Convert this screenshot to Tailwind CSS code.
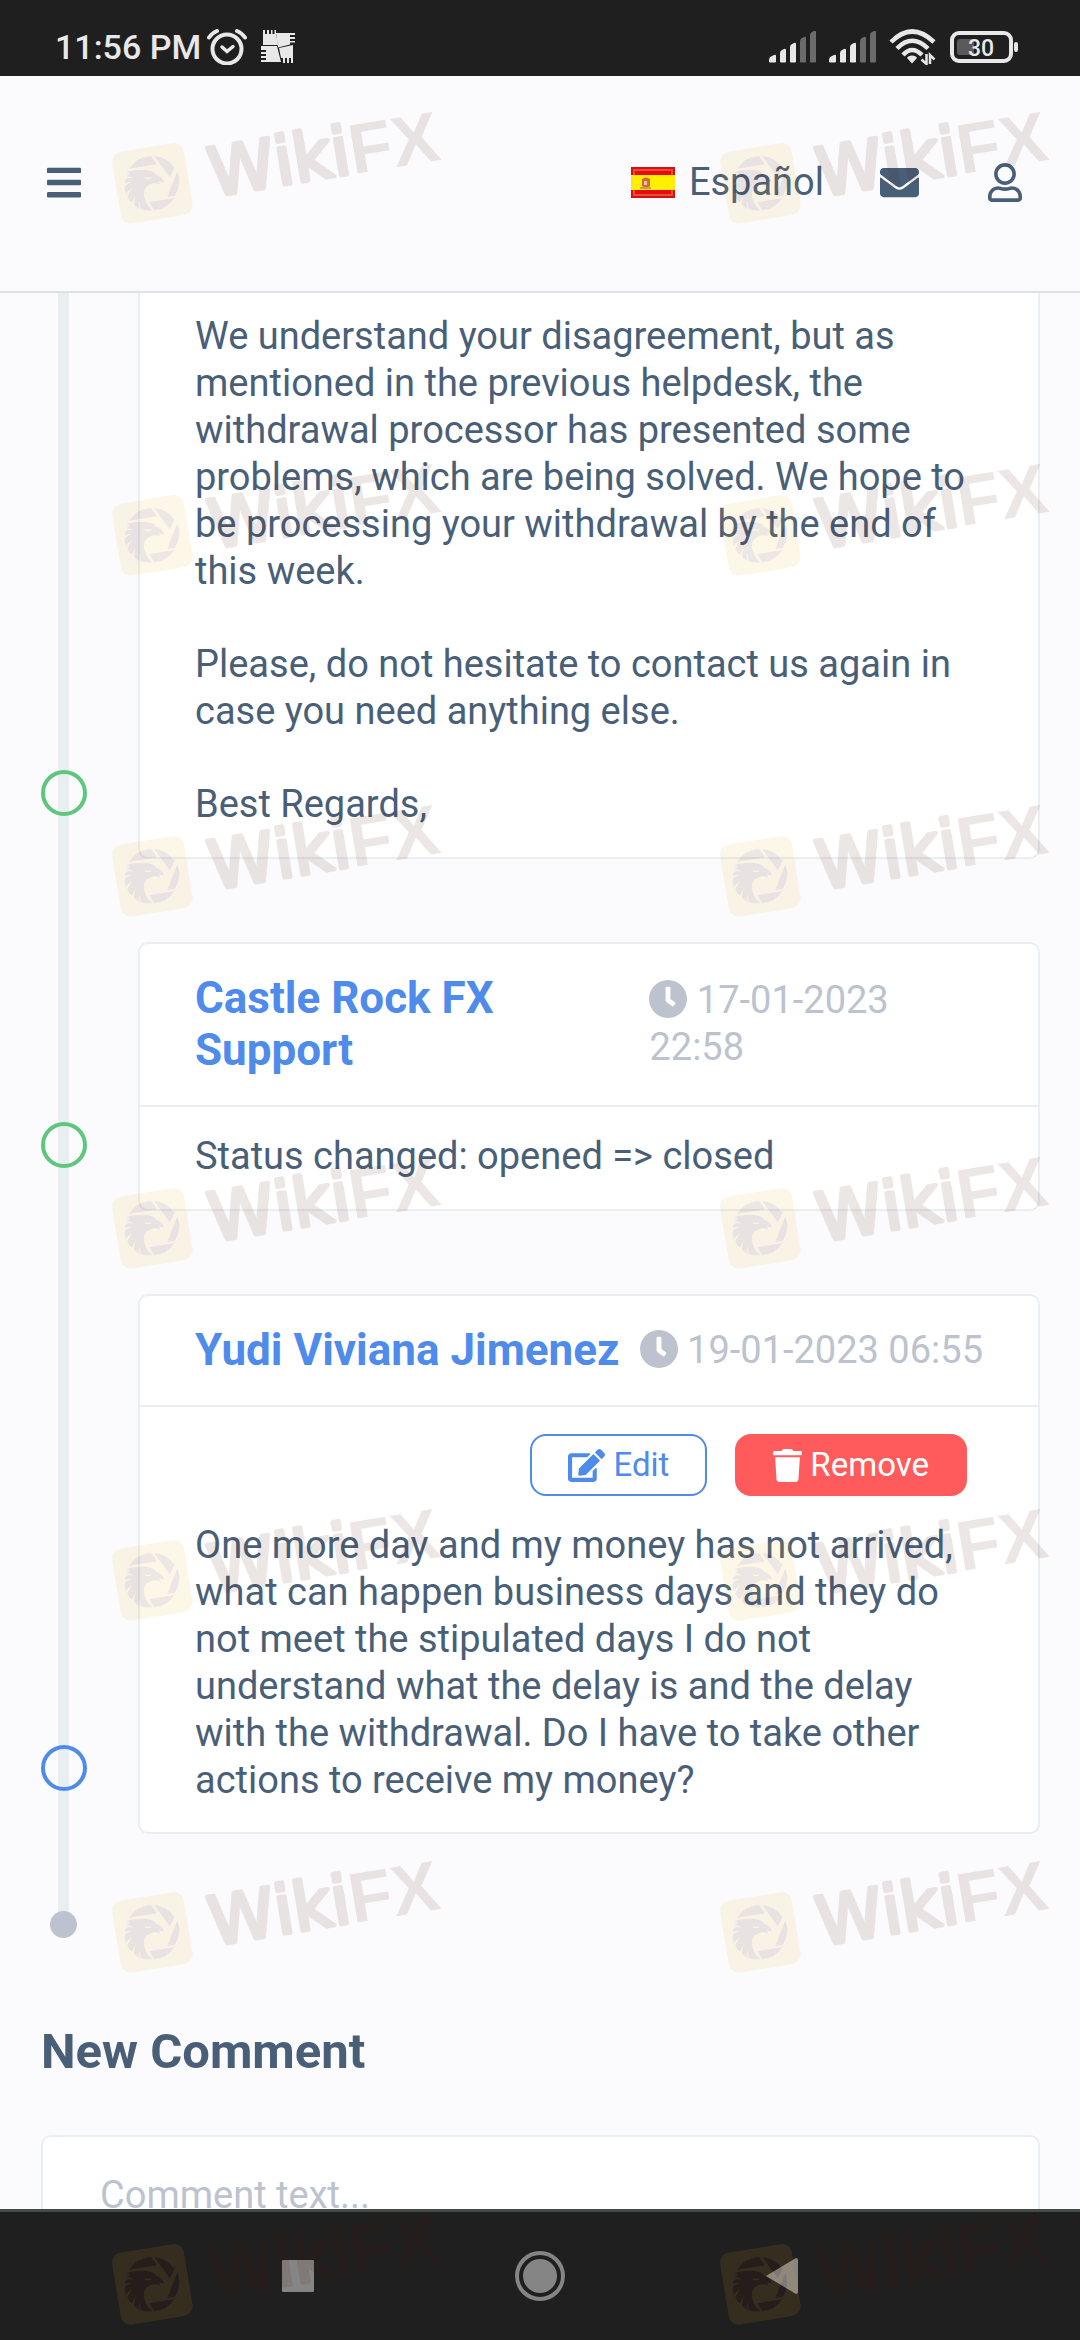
<!DOCTYPE html>
<html lang="en">
  <head>
    <meta charset="UTF-8" />
    <meta name="viewport" content="width=device-width, initial-scale=1.0" />
    <title>Support Ticket</title>
    <script src="https://cdn.jsdelivr.net/npm/@tailwindcss/browser@4"></script>
  </head>
  <body class="relative h-screen overflow-hidden flex flex-col bg-[#fbfbfd] text-[#495f78] font-['Roboto',sans-serif] text-[38px] leading-[47px]">
    <!-- Shared symbols -->
    <svg class="hidden" aria-hidden="true">
      <symbol id="icon-clock" viewBox="8 8 496 496">
        <path fill="currentColor" d="M256,8C119,8,8,119,8,256S119,504,256,504,504,393,504,256,393,8,256,8Zm92.49,313h0l-20,25a16,16,0,0,1-22.5,2.5h0l-67-49.72a40,40,0,0,1-15-31.23V112a16,16,0,0,1,16-16h32a16,16,0,0,1,16,16V256l58,42.5A16,16,0,0,1,348.49,321Z" />
      </symbol>
      <symbol id="icon-signal" viewBox="0 0 48 32">
        <g fill="#e8e8e8">
          <path d="M0 29q0-3 3-4l2-1q2-1 2 1v5.500q0 1-1 1h-5q-1 0-1-1z" />
          <path d="M11 22q0-2 2-3l2-1q2-1 2 1v11.500q0 1-1 1h-4q-1 0-1-1z" />
          <path d="M21 16q0-2 2-3l2-1q2-1 2 1v17.500q0 1-1 1h-4q-1 0-1-1z" />
        </g>
        <g fill="#6b6b6b">
          <path d="M31 10q0-2 2-3l2-1q2-1 2 1v23.500q0 1-1 1h-4q-1 0-1-1z" />
          <path d="M41 4q0-2 2-3l2-1q2-1 2 1v29.500q0 1-1 1h-4q-1 0-1-1z" />
        </g>
      </symbol>
      <symbol id="watermark" viewBox="0 0 1080 420">
        <rect x="48" y="141" width="218" height="218" rx="30" fill="#f0b41e" transform="rotate(-9.4 157 250)" />
        <g fill="#50140a">
          <path d="M88 206A82 82 0 0 1 153 168L171 193Z" />
          <path d="M162 168A82 82 0 0 1 223 203L210 232Z" />
          <path d="M232 214A82 82 0 0 1 224 288L202 290Z" />
          <path d="M148 307L223 294A82 82 0 0 1 163 331Z" />
          <path d="M79 216Q120 205 152 212Q166 216 167 224Q190 230 192 248Q185 243 176 246L181 254Q168 247 152 252Q128 262 132 289Q137 314 157 331Q138 333 122 327L118 304Q116 314 119 326Q108 322 102 314Q102 300 107 289Q97 299 95 308Q86 300 82 290Q86 277 98 264Q84 272 78 281Q73 270 75 257Q84 249 96 245Q83 246 75 250Q75 240 79 236Q88 233 101 235Q91 228 80 230Q82 224 91 221Z" />
        </g>
        <path d="M130 231Q142 236 155 231Q153 239 144 238Q134 238 130 231Z" fill="#f0b41e" />
        <g transform="translate(775 220) rotate(-9.4)" fill="#50140a">
          <text class="[font-kerning:none]" x="-442" y="-3" font-family="DejaVu Sans" font-size="201" stroke="#50140a" stroke-width="13" stroke-linejoin="round">Wiki</text>
          <text class="[font-kerning:none]" x="-16" y="0" font-family="Liberation Sans" font-weight="700" font-size="212">FX</text>
        </g>
      </symbol>
    </svg>

    <!-- Status Bar -->
    <div class="h-[76px] shrink-0 bg-[#1f1f1f] text-[#e8e8e8] flex items-center justify-between pl-[55px] pr-[61px] pt-[18px]">
      <div class="flex items-center">
        <span class="text-[34px] leading-10 font-medium">11:56 PM</span>
        <svg class="ml-[6px] w-10 h-9" viewBox="0 0 40 36" fill="none" stroke="currentColor" stroke-linecap="round">
          <circle cx="20" cy="20" r="14.500" stroke-width="4" />
          <path d="M2 8.500Q5 4 10 2M38 8.500Q35 4 30 2" stroke-width="4" />
          <path d="M15 18l5 4.500l6-5" stroke-width="3.500" />
        </svg>
        <svg class="ml-[14px] w-[34px] h-[34px]" viewBox="0 0 34 34" fill="currentColor">
          <path d="M2 0h2v4h2v-4h2v4h2v-4h1.500v4h2v-4h1.500v4l2 11H2z" />
          <path d="M15 3h19v2h-5v2h5v2h-5v2h5v1.500h-5v2l-12 3z" />
          <path d="M18 18l14-3v18h-2v-5h-2v5h-2v-5h-2v5h-2v-5l-2 0z" />
          <path d="M0 16h16l4 16H0v-2h5v-2h-5v-2h5v-2h-5v-2h5v-2h-5z" />
        </svg>
      </div>
      <div class="flex items-center">
        <svg class="w-12 h-8"><use href="#icon-signal" /></svg>
        <svg class="ml-3 w-12 h-8"><use href="#icon-signal" /></svg>
        <svg class="ml-3 w-[47px] h-9" viewBox="0 0 47 36" fill="none" stroke="currentColor" stroke-width="4.500">
          <path d="M2 13Q23 -8 45 13" />
          <path d="M8 19.500Q23 4 39 19.500" />
          <path d="M14 26Q23 16 33 26" />
          <path d="M23 26.500q4 0 5 2.500l-5 5.500l-5-5.500q1-2.500 5-2.500z" fill="currentColor" stroke="none" />
          <path d="M37.500 25v10l-5-4.500M41 35v-9l4.500 4.500" stroke-width="2.500" />
        </svg>
        <svg class="ml-[14px] w-[69px] h-8" viewBox="0 0 69 32">
          <rect x="2" y="2" width="59" height="28" rx="7" fill="none" stroke="currentColor" stroke-width="4" />
          <rect x="7" y="8" width="17" height="16" rx="3" fill="#5a5a5a" />
          <rect x="64" y="11" width="4" height="10" rx="2" fill="currentColor" />
          <text x="31" y="25" text-anchor="middle" font-size="23" font-weight="500" fill="currentColor">30</text>
        </svg>
      </div>
    </div>

    <!-- Header -->
    <header class="h-[217px] shrink-0 border-b-2 border-[#dee2e6] flex items-center justify-between pl-[47px] pr-[58px] pb-[2px]">
      <button type="button" aria-label="Menu">
        <svg class="w-[34px] h-[39px]" viewBox="0 0 448 512" fill="currentColor">
          <rect y="60" width="448" height="72" rx="16" />
          <rect y="220" width="448" height="72" rx="16" />
          <rect y="380" width="448" height="72" rx="16" />
        </svg>
      </button>
      <nav class="flex items-center">
        <a href="#" class="flex items-center gap-[14px]">
          <svg class="w-11 h-[31px]" viewBox="0 0 44 31">
            <rect width="44" height="31" fill="#d80f0f" />
            <rect x="2" y="2" width="40" height="27" fill="#ea4a3c" />
            <rect x="4" y="4" width="36" height="23" fill="#e60d0d" />
            <rect y="8" width="44" height="15" fill="#fbe618" />
            <rect x="2" y="9" width="40" height="13" fill="#fff000" />
            <path d="M11 12q4-3 8 0v7q-4 4-8 0z" fill="#d9653a" />
            <path d="M9 21h11" stroke="#c9a24a" stroke-width="2" />
            <rect x="13" y="14" width="3" height="4" fill="#f3c7a0" />
          </svg>
          <span>Español</span>
        </a>
        <a href="#" aria-label="Messages" class="ml-14">
          <svg class="w-[39px] h-[39px]" viewBox="0 0 512 512" fill="currentColor">
            <path d="M502.3 190.8c3.9-3.1 9.7-.2 9.7 4.7V400c0 26.5-21.5 48-48 48H48c-26.5 0-48-21.5-48-48V195.6c0-5 5.7-7.8 9.700-4.700 22.4 17.4 52.1 39.5 154.1 113.6 21.1 15.4 56.7 47.8 92.2 47.6 35.7.3 72-32.8 92.3-47.6 102-74.1 131.6-96.3 154-113.7zM256 320c23.2.4 56.6-29.2 73.4-41.4 132.7-96.3 142.8-104.7 173.4-128.700 5.8-4.5 9.2-11.5 9.2-18.9v-19c0-26.5-21.5-48-48-48H48c-26.5 0-48 21.5-48 48v19c0 7.4 3.4 14.3 9.2 18.9 30.6 23.9 40.7 32.4 173.4 128.7 16.8 12.2 50.2 41.8 73.4 41.4z" />
          </svg>
        </a>
        <a href="#" aria-label="Profile" class="ml-[69px]">
          <svg class="w-[34px] h-[39px]" viewBox="0 0 448 512" fill="currentColor">
            <path d="M313.6 304c-28.7 0-42.5 16-89.6 16-47.1 0-60.8-16-89.6-16C60.2 304 0 364.2 0 438.4V464c0 26.5 21.5 48 48 48h352c26.5 0 48-21.5 48-48v-25.6c0-74.2-60.2-134.4-134.4-134.4zM400 464H48v-25.6c0-47.6 38.8-86.4 86.4-86.4 14.6 0 38.3 16 89.6 16 51.7 0 74.9-16 89.6-16 47.6 0 86.4 38.8 86.4 86.4V464zM224 288c79.5 0 144-64.5 144-144S303.5 0 224 0 80 64.5 80 144s64.5 144 144 144zm0-240c52.9 0 96 43.1 96 96s-43.1 96-96 96-96-43.1-96-96 43.1-96 96-96z" />
          </svg>
        </a>
      </nav>
    </header>

    <!-- Main Content -->
    <main class="flex-1 min-h-0 overflow-hidden pl-[41px] pr-10">
      <!-- Timeline -->
      <section class="relative flex flex-col gap-[83px]">
        <div class="absolute left-[17px] top-0 bottom-0 w-[11px] bg-[#e9eef1]"></div>

        <article class="relative flex items-end">
          <div class="w-[97px] shrink-0 pb-[43px]">
            <div class="w-[46px] h-[46px] rounded-full border-4 border-[#5fc67d]"></div>
          </div>
          <div class="flex-1 bg-white border-2 border-t-0 border-[#e9eef2] rounded-b-[10px] px-[55px] pt-5 pb-[29px] flex flex-col gap-[46px]">
            <p>We understand your disagreement, but as mentioned in the previous helpdesk, the withdrawal processor has presented some problems, which are being solved. We hope to be processing your withdrawal by the end of this week.</p>
            <p>Please, do not hesitate to contact us again in case you need anything else.</p>
            <p>Best Regards,</p>
          </div>
        </article>

        <article class="relative flex items-end">
          <div class="w-[97px] shrink-0 pb-[43px]">
            <div class="w-[46px] h-[46px] rounded-full border-4 border-[#5fc67d]"></div>
          </div>
          <div class="flex-1 bg-white border-2 border-[#e9eef2] rounded-[10px]">
            <div class="flex items-center justify-between px-[55px] pt-7 pb-[29px] border-b-2 border-[#e9eef2]">
              <h2 class="text-[44px] leading-[52px] font-bold text-[#4f8bea]">Castle Rock FX Support</h2>
              <time class="text-[#bcc3cf]"><svg class="inline w-[38px] h-[38px] align-[-5px]"><use href="#icon-clock" /></svg> 17-01-2023 22:58</time>
            </div>
            <p class="px-[55px] pt-[26px] pb-[29px]">Status changed: opened =&gt; closed</p>
          </div>
        </article>

        <article class="relative flex items-end">
          <div class="w-[97px] shrink-0 pb-[43px]">
            <div class="w-[46px] h-[46px] rounded-full border-4 border-[#4f8bea]"></div>
          </div>
          <div class="flex-1 bg-white border-2 border-[#e9eef2] rounded-[10px]">
            <div class="flex items-center justify-between px-[55px] pt-7 pb-[29px] border-b-2 border-[#e9eef2]">
              <h2 class="text-[44px] leading-[52px] font-bold text-[#4f8bea]">Yudi Viviana Jimenez</h2>
              <time class="text-[#bcc3cf]"><svg class="inline w-[38px] h-[38px] align-[-5px]"><use href="#icon-clock" /></svg> 19-01-2023 06:55</time>
            </div>
            <div class="px-[55px] pt-[27px] pb-7">
              <div class="flex justify-end gap-7 pr-4 mb-[26px] text-[33px] leading-[58px]">
                <button type="button" class="flex items-center gap-2 px-9 rounded-2xl border-2 border-[#4f8bea] text-[#4f8bea]">
                  <svg class="w-[37px] h-[33px]" viewBox="0 0 576 512" fill="currentColor">
                    <path d="M402.6 83.2l90.2 90.2c3.8 3.8 3.8 10 0 13.8L274.4 405.6l-92.8 10.3c-12.4 1.4-22.9-9.1-21.5-21.5l10.3-92.8L388.8 83.2c3.8-3.8 10-3.8 13.8 0zm162-22.9l-48.8-48.8c-15.2-15.2-39.9-15.2-55.2 0l-35.4 35.4c-3.8 3.8-3.8 10 0 13.8l90.2 90.2c3.8 3.8 10 3.8 13.8 0l35.4-35.4c15.2-15.3 15.2-40 0-55.2zM384 346.2V448H64V128h229.8c3.2 0 6.2-1.3 8.5-3.5l40-40c7.6-7.6 2.2-20.5-8.5-20.5H48C21.5 64 0 85.5 0 112v352c0 26.5 21.5 48 48 48h352c26.5 0 48-21.5 48-48V306.2c0-10.7-12.9-16-20.5-8.5l-40 40c-2.2 2.3-3.5 5.3-3.5 8.5z" />
                  </svg>
                  Edit
                </button>
                <button type="button" class="flex items-center gap-2 px-9 rounded-2xl border-2 border-[#ff5b5c] bg-[#ff5b5c] text-white">
                  <svg class="w-[29px] h-[33px]" viewBox="0 0 448 512" fill="currentColor">
                    <path d="M432 32H312l-9.4-18.7A24 24 0 0 0 281.1 0H166.8a23.72 23.72 0 0 0-21.4 13.3L136 32H16A16 16 0 0 0 0 48v32a16 16 0 0 0 16 16h416a16 16 0 0 0 16-16V48a16 16 0 0 0-16-16zM32 128l21.200 339a48 48 0 0 0 47.9 45h245.8a48 48 0 0 0 47.9-45L416 128z" />
                  </svg>
                  Remove
                </button>
              </div>
              <p>One more day and my money has not arrived, what can happen business days and they do not meet the stipulated days I do not understand what the delay is and the delay with the withdrawal. Do I have to take other actions to receive my money?</p>
            </div>
          </div>
        </article>
      </section>

      <!-- Timeline end -->
      <div class="relative h-[104px]">
        <div class="absolute left-[17px] top-0 bottom-3 w-[11px] bg-[#e9eef1]"></div>
        <div class="absolute left-[9px] bottom-0 w-[27px] h-[27px] rounded-full bg-[#bcc3cf]"></div>
      </div>

      <!-- New Comment -->
      <form class="pt-[85px]">
        <label for="comment" class="block text-[49px] leading-[58px] font-bold">New Comment</label>
        <textarea id="comment" placeholder="Comment text..." class="block w-full h-60 mt-[54px] px-[57px] py-[35px] bg-white border-2 border-[#e9eef2] rounded-[10px] resize-none placeholder:text-[#bcc3cf]"></textarea>
      </form>
    </main>

    <!-- Navigation Bar -->
    <div class="h-[131px] shrink-0 bg-[#1f1f1f] border-t-3 border-[#454c48] text-[#858585] flex items-center justify-center gap-[201px]">
      <button type="button" aria-label="Recent apps">
        <svg class="w-8 h-8" viewBox="0 0 32 32" fill="currentColor"><rect width="32" height="32" rx="1" /></svg>
      </button>
      <button type="button" aria-label="Home">
        <svg class="w-[50px] h-[50px]" viewBox="0 0 50 50" fill="currentColor">
          <circle cx="25" cy="25" r="23" fill="none" stroke="currentColor" stroke-width="4" />
          <circle cx="25" cy="25" r="17" />
        </svg>
      </button>
      <button type="button" aria-label="Back">
        <svg class="w-8 h-9" viewBox="0 0 32 36" fill="currentColor"><path d="M0 18L30 0Q32 0 32 2V34Q32 36 30 36Z" /></svg>
      </button>
    </div>

    <!-- Watermark overlay -->
    <div class="absolute inset-0 overflow-hidden pointer-events-none opacity-10 pt-[100px] pl-[100px] flex flex-col gap-[212px]" aria-hidden="true">
      <div class="flex gap-[248px]">
        <svg class="w-[360px] h-[140px] shrink-0"><use href="#watermark" /></svg>
        <svg class="w-[360px] h-[140px] shrink-0"><use href="#watermark" /></svg>
      </div>
      <div class="flex gap-[248px] -mb-[11px]">
        <svg class="w-[360px] h-[140px] shrink-0"><use href="#watermark" /></svg>
        <svg class="w-[360px] h-[140px] shrink-0"><use href="#watermark" /></svg>
      </div>
      <div class="flex gap-[248px]">
        <svg class="w-[360px] h-[140px] shrink-0"><use href="#watermark" /></svg>
        <svg class="w-[360px] h-[140px] shrink-0"><use href="#watermark" /></svg>
      </div>
      <div class="flex gap-[248px]">
        <svg class="w-[360px] h-[140px] shrink-0"><use href="#watermark" /></svg>
        <svg class="w-[360px] h-[140px] shrink-0"><use href="#watermark" /></svg>
      </div>
      <div class="flex gap-[248px]">
        <svg class="w-[360px] h-[140px] shrink-0"><use href="#watermark" /></svg>
        <svg class="w-[360px] h-[140px] shrink-0"><use href="#watermark" /></svg>
      </div>
      <div class="flex gap-[248px]">
        <svg class="w-[360px] h-[140px] shrink-0"><use href="#watermark" /></svg>
        <svg class="w-[360px] h-[140px] shrink-0"><use href="#watermark" /></svg>
      </div>
      <div class="flex gap-[248px]">
        <svg class="w-[360px] h-[140px] shrink-0"><use href="#watermark" /></svg>
        <svg class="w-[360px] h-[140px] shrink-0"><use href="#watermark" /></svg>
      </div>
    </div>
  </body>
</html>
